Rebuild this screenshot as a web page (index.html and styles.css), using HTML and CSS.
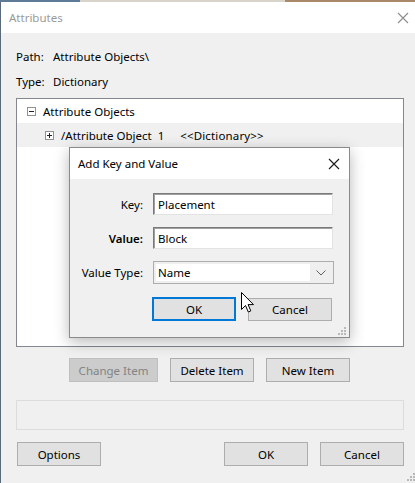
FILE: index.html
```html
<!DOCTYPE html>
<html>
<head>
<meta charset="utf-8">
<link rel="stylesheet" href="styles.css">
</head>
<body>
<div class="screen">
  <div class="strip"></div>
  <div class="window">
    <div class="titlebar">
      <span class="title">Attributes</span>
      <svg class="close" width="12" height="12" viewBox="0 0 12 12"><path d="M1 1L11 11M11 1L1 11" stroke="#8c8c8c" stroke-width="1.1" fill="none"/></svg>
    </div>
    <div class="client">
      <div class="info-row row-path"><span class="lbl">Path:</span><span class="val">Attribute Objects\</span></div>
      <div class="info-row row-type"><span class="lbl">Type:</span><span class="val">Dictionary</span></div>
      <div class="tree">
        <div class="node node-root">
          <span class="expander"><span class="h"></span></span>
          <span class="ntext">Attribute Objects</span>
        </div>
        <div class="node node-child">
          <span class="expander"><span class="h"></span><span class="v"></span></span>
          <span class="ntext">/Attribute Object</span><span class="nindex">1</span><span class="ntype">&lt;&lt;Dictionary&gt;&gt;</span>
        </div>
      </div>
      <div class="item-buttons">
        <div class="btn disabled">Change Item</div>
        <div class="btn">Delete Item</div>
        <div class="btn">New Item</div>
      </div>
      <div class="status"></div>
      <div class="bottom-buttons">
        <div class="btn">Options</div>
        <div class="spacer"></div>
        <div class="btn">OK</div>
        <div class="btn">Cancel</div>
      </div>
    </div>
    <div class="grip main-grip">
      <svg width="8" height="8" viewBox="0 0 8 8" fill="#b9b9b9"><rect x="6" y="0" width="2" height="2"/><rect x="3" y="3" width="2" height="2"/><rect x="6" y="3" width="2" height="2"/><rect x="0" y="6" width="2" height="2"/><rect x="3" y="6" width="2" height="2"/><rect x="6" y="6" width="2" height="2"/></svg>
    </div>
  </div>

  <div class="dialog">
    <div class="dtitlebar">
      <span class="dtitle">Add Key and Value</span>
      <svg class="dclose" width="12" height="12" viewBox="0 0 12 12"><path d="M1 1L11 11M11 1L1 11" stroke="#1a1a1a" stroke-width="1.1" fill="none"/></svg>
    </div>
    <div class="dclient">
      <div class="field">
        <span class="flabel">Key:</span>
        <div class="input">Placement</div>
      </div>
      <div class="field">
        <span class="flabel bold">Value:</span>
        <div class="input">Block</div>
      </div>
      <div class="field field-combo">
        <span class="flabel">Value Type:</span>
        <div class="combo">
          <div class="combo-text">Name</div>
          <svg class="chev" width="10" height="6" viewBox="0 0 10 6"><path d="M0.5 0.5L5 5L9.5 0.5" stroke="#606060" stroke-width="1" fill="none"/></svg>
        </div>
      </div>
      <div class="dbuttons">
        <div class="btn default">OK</div>
        <div class="btn">Cancel</div>
      </div>
    </div>
    <div class="grip dgrip">
      <svg width="8" height="8" viewBox="0 0 8 8" fill="#b9b9b9"><rect x="6" y="0" width="2" height="2"/><rect x="3" y="3" width="2" height="2"/><rect x="6" y="3" width="2" height="2"/><rect x="0" y="6" width="2" height="2"/><rect x="3" y="6" width="2" height="2"/><rect x="6" y="6" width="2" height="2"/></svg>
    </div>
  </div>

  <svg class="cursor" width="13" height="21" viewBox="0 0 13 21"><path d="M0.5 0.5V17.5L4.5 13.5L7.3 20L9.8 18.9L7.1 12.6H12.5Z" fill="#fff" stroke="#000" stroke-width="1" stroke-linejoin="miter"/></svg>
</div>
</body>
</html>
```

FILE: styles.css
```css
* { box-sizing: border-box; }
html, body { margin: 0; padding: 0; }
body {
  width: 415px;
  height: 483px;
  overflow: hidden;
  font-family: "Noto Sans", "Open Sans", sans-serif;
  font-size: 11.5px;
  color: #000;
  background: #f0f0f0;
}
.screen {
  position: relative;
  width: 415px;
  height: 483px;
  display: flex;
  flex-direction: column;
}
.strip {
  height: 2px;
  background: linear-gradient(to right, #5d7b96 0, #5d7b96 80px, #d8d4cc 80px, #d8d4cc 285px, #a88a6a 285px, #a88a6a 100%);
}
.window {
  position: relative;
  flex: 1;
  display: flex;
  flex-direction: column;
  border-left: 1px solid #5a6a7a;
  background: #f0f0f0;
}
.titlebar {
  height: 31px;
  background: #fff;
  display: flex;
  align-items: center;
  justify-content: space-between;
  padding: 0 6px 0 8px;
}
.title { color: #9a9a9a; }
.close { display: block; }

.client {
  display: flex;
  flex-direction: column;
  padding: 0 11px 0 15px;
}
.info-row {
  display: flex;
  height: 25px;
  align-items: center;
}
.row-path { margin-top: 11px; }
.lbl { width: 37px; }
.tree {
  margin-top: 4px;
  height: 249px;
  background: #fff;
  border: 1px solid #828790;
}
.node {
  height: 24px;
  display: flex;
  align-items: center;
}
.node-root { padding-left: 10px; }
.node-child { padding-left: 28px; background: #f0f0f0; }
.nindex { margin-left: 6px; }
.ntype { margin-left: 16px; letter-spacing: 0.15px; }
.expander {
  position: relative;
  width: 9px;
  height: 9px;
  border: 1px solid #919191;
  background: #fff;
  margin-right: 7px;
  flex: none;
}
.expander .h {
  position: absolute;
  left: 1px; top: 3px;
  width: 5px; height: 1px;
  background: #222;
}
.expander .v {
  position: absolute;
  left: 3px; top: 1px;
  width: 1px; height: 5px;
  background: #222;
}

.btn {
  width: 84px;
  height: 24px;
  background: #e1e1e1;
  border: 1px solid #adadad;
  display: flex;
  align-items: center;
  justify-content: center;
  flex: none;
}
.btn.disabled {
  background: #cccccc;
  border-color: #bfbfbf;
  color: #838383;
}
.item-buttons {
  display: flex;
  gap: 12px;
  margin-top: 11px;
  padding-left: 53px;
}
.item-buttons .btn { width: 89px; }
.item-buttons .btn + .btn { width: 84px; }
.status {
  margin-top: 18px;
  height: 30px;
  border: 1px solid #dcdcdc;
}
.bottom-buttons {
  display: flex;
  gap: 12px;
  margin-top: 12px;
  padding-left: 1px;
}
.spacer { flex: 1; }

.grip { position: absolute; line-height: 0; }
.main-grip { right: 0; bottom: 2px; }

/* Sub dialog */
.dialog {
  position: absolute;
  left: 69px;
  top: 147px;
  width: 281px;
  height: 191px;
  border: 1px solid #8a8a8a;
  background: #f0f0f0;
  box-shadow: 0 4px 14px rgba(0,0,0,0.28);
  display: flex;
  flex-direction: column;
}
.dtitlebar {
  height: 31px;
  background: #fff;
  display: flex;
  align-items: center;
  justify-content: space-between;
  padding: 0 9px 0 8px;
}
.dclose { display: block; }
.dclient {
  display: flex;
  flex-direction: column;
  padding: 14px 16px 0 0;
}
.field {
  display: flex;
  align-items: center;
  height: 22px;
  margin-bottom: 12px;
}
.flabel {
  width: 83px;
  padding-right: 10px;
  text-align: right;
  flex: none;
}
.flabel.bold { font-weight: 600; }
.input {
  flex: 1;
  height: 22px;
  background: #fff;
  border: 1px solid;
  border-color: #7a7a7a #e3e3e3 #e3e3e3 #7a7a7a;
  box-shadow: inset 1px 1px 0 #a0a0a0;
  padding-left: 4px;
  display: flex;
  align-items: center;
}
.field-combo { height: 23px; margin-bottom: 13px; }
.combo {
  flex: 1;
  height: 23px;
  border: 1px solid #adadad;
  background: #efefef;
  display: flex;
  align-items: center;
  padding: 2px;
  margin-right: -1px;
}
.combo-text {
  flex: 1;
  height: 100%;
  background: #fff;
  padding-left: 2px;
  display: flex;
  align-items: center;
}
.chev { margin: 0 5px 0 6px; display: block; }
.dbuttons {
  display: flex;
  gap: 12px;
  padding-left: 82px;
  align-items: flex-start;
}
.dbuttons .btn.default {
  border: 2px solid #0078d7;
  height: 24px;
}
.dbuttons .btn + .btn { height: 23px; margin-top: 1px; }
.dgrip { right: 3px; bottom: 2px; }

.cursor {
  position: absolute;
  left: 241px;
  top: 292px;
}
```
